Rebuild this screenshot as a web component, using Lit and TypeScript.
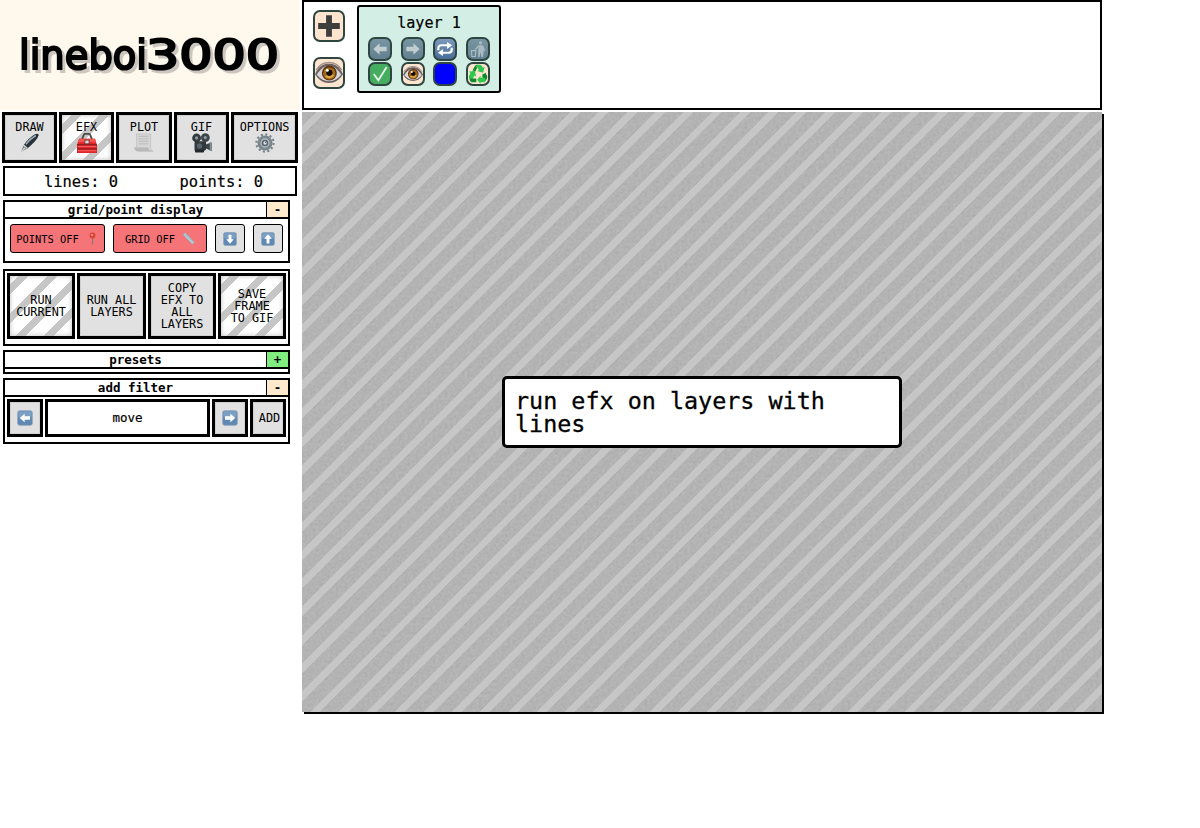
import { LitElement, html, svg, css } from "lit";
import { customElement } from "lit/decorators.js";

const arrowShapes: Record<string, number> = { left: 0, up: 90, right: 180, down: 270 };

const blueArrow = (dir: string) => svg`
  <rect x="1" y="1" width="22" height="22" rx="3" fill="#5f88b3" stroke="#8a9fb5" stroke-width="1"/>
  <rect x="2" y="2" width="20" height="9" rx="2" fill="#7c9fc4"/>
  <g transform="rotate(${arrowShapes[dir]} 12 12)"><path d="M4 12 11.500 5.500v4h8v5h-8v4z" fill="#fff"/></g>`;

const eye = svg`
  <path d="M0 13C3 6 7 4 12 4s9 2 12 9c-3 5-7 7.500-12 7.500S3 18 0 13z" fill="#6c625f"/>
  <path d="M1.500 13.500C5 8 8 6 12 6s7 2 10.500 7.500C19 17.500 16 19 12 19s-7-1.500-10.500-5.500z" fill="#d9d6dc"/>
  <path d="M1 9.500C4 4.500 8 3 12 3s8 1.500 11 6.500" fill="none" stroke="#a3938b" stroke-width="1.200"/>
  <circle cx="12.300" cy="12" r="6.400" fill="#5d3510"/>
  <circle cx="12.300" cy="12.400" r="5.200" fill="#a56c1c"/>
  <path d="M8.500 15a5 5 0 0 0 8-1l-4-2z" fill="#dba747"/>
  <circle cx="12.300" cy="11.800" r="2.700" fill="#170b06"/>
  <circle cx="10.500" cy="9.600" r="1.300" fill="#fff"/>`;

const icons: Record<string, unknown> = {
  left: blueArrow("left"),
  right: blueArrow("right"),
  up: blueArrow("up"),
  down: blueArrow("down"),
  eye,
  pen: svg`
    <path d="M1 23 4 15 9 18.500 3 22z" fill="#858b8e"/>
    <path d="M4.500 14.500Q10 6 18 1.500q4-1.500 4.500 1-1 4-5 8T9 18.500z" fill="#273137"/>
    <path d="M7 13.500Q12 7 19 3" fill="none" stroke="#9cacb6" stroke-width="1.800"/>
    <path d="m4.500 14.500 4.500 4M1 23l5-5" stroke="#d3d7d9" stroke-width="1.400"/>`,
  toolbox: svg`
    <path d="M6 8 8 2.500q.5-1.500 2-1.500h4q1.500 0 2 1.500L18 8" fill="none" stroke="#4d4a4b" stroke-width="2.200"/>
    <path d="M2.500 7h19L24 14v10H0V14z" fill="#e0252b"/>
    <path d="M2.500 7h19l1.500 4H1z" fill="#f65350"/>
    <path d="M0 14h24M0 19h24" stroke="#941c20" stroke-width="1.500"/>
    <path d="M1 16.300h22M1 21.300h22" stroke="#ff706b"/>
    <rect x="9.500" y="8.500" width="5" height="4.500" fill="#ddd" stroke="#6b3031"/>`,
  paper: svg`
    <path d="M3 1h17v17q0 3 3 4H6q-4 0-4-4h1z" fill="#d6d6d6" stroke="#bebebe" stroke-width=".8"/>
    <path d="M5.500 4h12M5.500 7h12M5.500 10h12M5.500 13h12" stroke="#b6b6b6" stroke-width="1"/>
    <path d="M0 17.500h17q1 4.500 6 4.500H5q-4 0-5-4.500z" fill="#b8b8b8"/>`,
  camera: svg`
    <circle cx="5.500" cy="6" r="5.300" fill="#33393d"/><circle cx="16" cy="5.500" r="5.300" fill="#3e454a"/>
    <circle cx="5.500" cy="6" r="2" fill="#8b979e"/><circle cx="16" cy="5.500" r="2" fill="#8b979e"/>
    <rect x="3" y="10" width="14" height="11" rx="2" fill="#30383c"/>
    <path d="m16 14 7.500-3v11L16 18z" fill="#3a4348"/><path d="M22 11v10" stroke="#87939a" stroke-width="1.500"/>
    <circle cx="9" cy="15.500" r="3.300" fill="#57636b"/><path d="M3 20h12l-1 3.500H4z" fill="#22282b"/>`,
  gear: svg`
    <circle cx="12" cy="12" r="10.300" fill="none" stroke="#78848c" stroke-width="2.600" stroke-dasharray="2.500 2.893"/>
    <circle cx="12" cy="12" r="7.300" fill="#b2bcc3" stroke="#7a858c" stroke-width="3.400"/>
    <circle cx="12" cy="12" r="3" fill="#dfe3e6" stroke="#59646c" stroke-width="2"/>
    <path d="m12 12 2-2" stroke="#59646c" stroke-width="1.200"/>`,
  pin: svg`
    <path d="M12 11v12" stroke="#8b7773" stroke-width="2.200"/>
    <circle cx="12" cy="6.500" r="5.500" fill="#d94638"/><circle cx="11" cy="5.500" r="2" fill="#f39a8f"/>`,
  ruler: svg`
    <path d="M2 5 6 1 23 19 19 23z" fill="#b7cbd4" stroke="#8aa0ac"/>
    <path d="m8 4-2 2m5 1-2 2m5 1-2 2m5 1-2 2m5 1-2 2" stroke="#71899a" stroke-width="1"/>`,
  plus: svg`<path d="M9.300 2h5.400v7.300H22v5.400h-7.300V22H9.300v-7.300H2V9.300h7.300z" fill="#3e3e3e"/>`,
  fadeLeft: svg`<path d="M4 12 11.500 5v4.300H20v5.400h-8.500V19z" fill="#c2cdd2"/>`,
  fadeRight: svg`<path d="M20 12 12.500 5v4.300H4v5.400h8.500V19z" fill="#c2cdd2"/>`,
  loop: svg`
    <path d="M4 13.500V11q0-3.500 3.500-3.500H16M20 10.500V13q0 3.500-3.500 3.500H8" fill="none" stroke="#fff" stroke-width="2.600"/>
    <path d="m14.500 3.500 6 4-6 4.500zM9.500 12l-6 4.500 6 4z" fill="#fff"/>`,
  litter: svg`
    <circle cx="15" cy="4.500" r="1.900" fill="#a9bac2"/>
    <path d="M12.500 7.500h5l1.500 6-1 8h-1.800L15 15.500 14 21.500h-1.800z" fill="#a9bac2"/>
    <path d="m13 8-4.500 5M17.500 8l2.500 6" stroke="#a9bac2" stroke-width="1.500" fill="none"/>
    <path d="M4 14h5.500l-.7 7H4.700z" fill="none" stroke="#a9bac2" stroke-width="1.400"/>`,
  check: svg`<path d="m4.500 12 5.500 7.500L20 3.500" fill="none" stroke="#e5f4e7" stroke-width="2.200"/>`,
  recycle: svg`
    <path d="M5.500 7.500 8.500 2q1-1 3-1l-1.500 2 1 1.500-2.500 5z" fill="#0c8c2b"/>
    <path d="M10 1h4.500q1.500 0 2.500 2l1 1.500 2-1-2 7-7-2 2.200-1.300L11 4z" fill="#2bc94d"/>
    <path d="m17 13 4-2.500 2 4q.5 1.500-.5 3.500L20.500 21l-3-4.500z" fill="#0c8c2b"/>
    <path d="M21.500 19.500 20 22h-5v2l-4-5 4-5v2.500h5z" fill="#2bc94d"/>
    <path d="M3 10.500.800 9.300 8 8l2 7-2.300-1.300L5.500 18 2 19 .8 15z" fill="#2bc94d"/>
    <path d="M2 17.500h8V22H5q-1.500 0-2.500-2z" fill="#0c8c2b"/>`,
};

const icon = (name: string, cls = "") =>
  html`<svg class="ico ${cls}" viewBox="0 0 24 24" aria-hidden="true">${icons[name]}</svg>`;

@customElement("app-root")
export class AppRoot extends LitElement {
  static styles = css`
    :host { display: flex; width: 1200px; height: 828px; overflow: hidden; background: #fff; color: #000;
      font-family: "DejaVu Sans Mono", monospace; font-size: 11.8px; }
    * { box-sizing: border-box; }
    button { font: inherit; color: inherit; margin: 0; padding: 0; }
    .ico { display: block; width: 20px; height: 20px; flex: none; }
    .side { width: 302px; flex: none; }
    .logo { width: 300px; height: 110px; background: #fff8ec; margin-bottom: 2px; }
    .logo svg { display: block; }
    .logo text { font-family: "DejaVu Sans", sans-serif; font-size: 41px; stroke: #000; stroke-width: 2.2px; }
    .logo g { filter: drop-shadow(3px 3px 0 #cbc6bf); }
    .nav { display: flex; gap: 2px; padding-left: 2px; height: 51px; }
    .key { border: 3px solid #000; background: #e1e1e1; box-shadow: inset 0 0 0 1px #cfcfcf;
      display: flex; align-items: center; justify-content: center; text-align: center; line-height: 12px; }
    .key.on { background: repeating-linear-gradient(-45deg, #fff 0 13px, #c6c6c6 13px 20px);
      box-shadow: inset 0 0 5px #bbb; }
    .nav .key { flex-direction: column; justify-content: flex-start; padding-top: 6px; width: 55px; }
    .nav .key.w56 { width: 56px; }
    .nav .key.w67 { width: 67px; }
    .stats { margin: 3px 0 4px 3px; width: 294px; height: 30px; border: 2px solid #000;
      display: flex; justify-content: space-between; padding: 0 32px 0 39px; font-size: 15.4px; line-height: 28px;
      -webkit-text-stroke: 0.2px #000; }
    .panel { margin-left: 3px; width: 287px; border: 2px solid #000; }
    .title { display: flex; height: 17px; border-bottom: 2px solid #000; line-height: 15px; font-size: 12.5px;
      font-weight: bold; text-align: center; }
    .title span { flex: 1; }
    .toggle { width: 22px; border: 0; border-left: 1px solid #000; background: #ffe9cd; line-height: 15px; font-weight: bold; }
    .toggle.plus { background: #80ec80; }
    .display { height: 63px; margin-bottom: 6px; }
    .row { display: flex; gap: 8px; padding: 5px; }
    .small { height: 29px; width: 94px; border: 1px solid #000; border-radius: 3px; background: #f47478; font-size: 10.4px;
      display: flex; align-items: center; justify-content: center; gap: 7px; }
    .small.first { width: 95px; }
    .small.sq { width: 30px; background: #e1e1e1; }
    .small .ico { width: 13px; height: 13px; }
    .small.sq .ico { width: 14px; height: 14px; }
    .run { height: 77px; padding: 2px; display: flex; gap: 2px; margin-bottom: 4px; }
    .run .key { width: 68px; height: 66px; }
    .run .key.wide { width: 69px; }
    .presets { height: 24px; margin-bottom: 4px; }
    .filter { height: 66px; }
    .filter .pick { display: flex; gap: 2px; padding: 2px; }
    .filter .key { width: 36px; height: 38px; }
    .filter .key.add { padding-left: 3px; }
    .filter .key.name { width: 165px; background: #fff; box-shadow: none; font-size: 12.5px; -webkit-text-stroke: 0.2px #000; }
    .filter .ico { width: 16px; height: 16px; margin-right: 1px; }
    .main { width: 800px; flex: none; }
    .layers { height: 110px; border: 2px solid #000; margin-bottom: 2px; display: flex; padding: 3px 9px; gap: 12px; }
    .tools { display: flex; flex-direction: column; gap: 15px; padding-top: 5px; }
    .tile { width: 24px; height: 24px; border: 2px solid #2f4640; border-radius: 7px; background: #ffe4d0;
      display: flex; align-items: center; justify-content: center; overflow: hidden; }
    .tile.big { width: 32px; height: 32px; }
    .tile.big .ico { width: 28px; height: 28px; }
    .tile.big .ico.plus { width: 26px; height: 26px; }
    .tile.dim { background: linear-gradient(#7895a2, #62808f); }
    .tile.blue { background: linear-gradient(#7c9abd, #486e99); }
    .tile.green { background: #45ad5f; }
    .tile.ink { background: #00f; }
    .card { width: 144px; height: 88px; border: 2px solid #000; border-radius: 3px; background: #d3eee4; }
    .card .name { text-align: center; font-size: 15.1px; line-height: 21px; padding-top: 6px; height: 30px;
      -webkit-text-stroke: 0.2px #000; }
    .grid { display: grid; grid-template-columns: repeat(4, 24px); column-gap: 8.67px; row-gap: 1px; justify-content: center; }
    .canvas { height: 600px; box-shadow: 2px 2px #000; background: #aeaeae; display: grid; isolation: isolate; }
    .canvas > * { grid-area: 1 / 1; }
    .grain { width: 800px; height: 600px; opacity: 0.13; }
    .stripes { z-index: 1; background: repeating-linear-gradient(-45deg, transparent 0 13px, #c6c6c6 13px 20px); }
    .message { z-index: 2; place-self: center; width: 400px; height: 72px; border: 3px solid #000; border-radius: 5px;
      background: #fff; font-size: 23.4px; line-height: 23px; padding: 11px 10px; -webkit-text-stroke: 0.3px #000; }
  `;

  render() {
    return html`
      <aside class="side">
        <div class="logo">
          <svg width="300" height="110">
            <g>
              <text x="19" y="69" textLength="128" lengthAdjust="spacingAndGlyphs">lineboi</text>
              <text x="146" y="69" textLength="133" lengthAdjust="spacingAndGlyphs">3000</text>
            </g>
          </svg>
        </div>
        <nav class="nav">
          <button class="key">DRAW${icon("pen")}</button>
          <button class="key on">EFX${icon("toolbox")}</button>
          <button class="key w56">PLOT${icon("paper")}</button>
          <button class="key">GIF${icon("camera")}</button>
          <button class="key w67">OPTIONS${icon("gear")}</button>
        </nav>
        <div class="stats"><span>lines: 0</span><span>points: 0</span></div>
        <section class="panel display">
          <div class="title"><span>grid/point display</span><button class="toggle">-</button></div>
          <div class="row">
            <button class="small first">POINTS OFF ${icon("pin")}</button>
            <button class="small">GRID OFF ${icon("ruler")}</button>
            <button class="small sq">${icon("down")}</button>
            <button class="small sq">${icon("up")}</button>
          </div>
        </section>
        <section class="panel run">
          <button class="key on">RUN<br />CURRENT</button>
          <button class="key wide">RUN ALL<br />LAYERS</button>
          <button class="key">COPY<br />EFX TO<br />ALL<br />LAYERS</button>
          <button class="key on">SAVE<br />FRAME<br />TO GIF</button>
        </section>
        <section class="panel presets">
          <div class="title"><span>presets</span><button class="toggle plus">+</button></div>
        </section>
        <section class="panel filter">
          <div class="title"><span>add filter</span><button class="toggle">-</button></div>
          <div class="pick">
            <button class="key">${icon("left")}</button>
            <button class="key name">move</button>
            <button class="key">${icon("right")}</button>
            <button class="key add">ADD</button>
          </div>
        </section>
      </aside>
      <main class="main">
        <div class="layers">
          <div class="tools">
            <button class="tile big">${icon("plus", "plus")}</button>
            <button class="tile big">${icon("eye")}</button>
          </div>
          <div class="card">
            <div class="name">layer 1</div>
            <div class="grid">
              <button class="tile dim">${icon("fadeLeft")}</button>
              <button class="tile dim">${icon("fadeRight")}</button>
              <button class="tile blue">${icon("loop")}</button>
              <button class="tile dim">${icon("litter")}</button>
              <button class="tile green">${icon("check")}</button>
              <button class="tile">${icon("eye")}</button>
              <button class="tile ink"></button>
              <button class="tile">${icon("recycle")}</button>
            </div>
          </div>
        </div>
        <div class="canvas">
          <svg class="grain" aria-hidden="true">
            <filter id="grain"><feTurbulence type="fractalNoise" baseFrequency="0.35" numOctaves="2" /><feColorMatrix type="matrix" values="1 0 0 0 .19  1 0 0 0 .19  1 0 0 0 .19  0 0 0 0 1" /></filter>
            <rect width="800" height="600" filter="url(#grain)" />
          </svg>
          <div class="stripes"></div>
          <div class="message">run efx on layers with lines</div>
        </div>
      </main>
    `;
  }
}
